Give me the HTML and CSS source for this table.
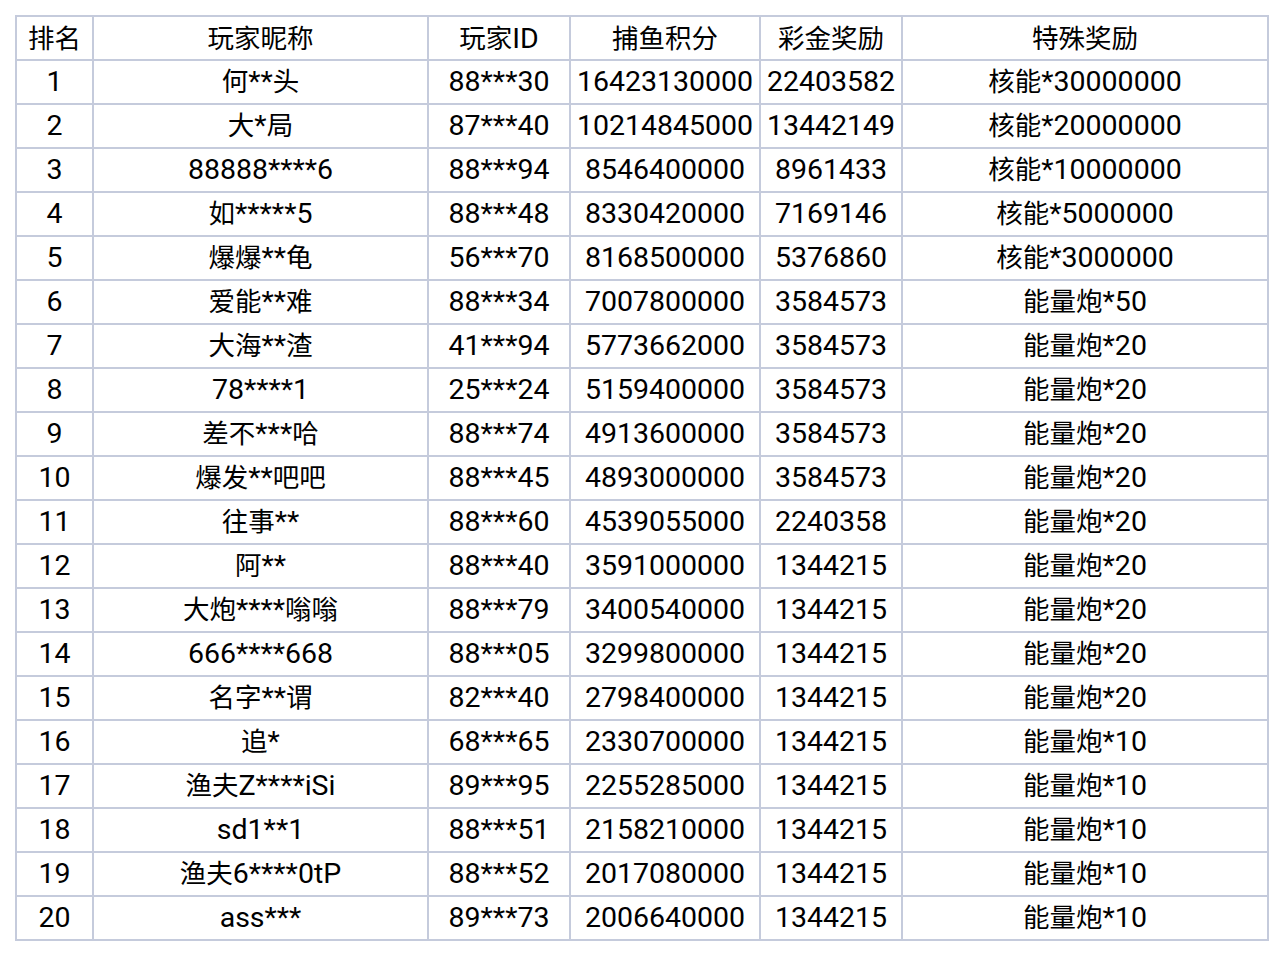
FILE: index.html
```html
<!DOCTYPE html>
<html lang="zh-CN">
<head>
<meta charset="utf-8">
<title>排名</title>
<link rel="stylesheet" href="styles.css">
</head>
<body>
<table class="rank">
  <colgroup>
    <col class="c1"><col class="c2"><col class="c3"><col class="c4"><col class="c5"><col class="c6">
  </colgroup>
  <thead>
    <tr><th><span class="zh">排名</span></th><th><span class="zh">玩家昵称</span></th><th><span class="zh">玩家</span>ID</th><th><span class="zh">捕鱼积分</span></th><th><span class="zh">彩金奖励</span></th><th><span class="zh">特殊奖励</span></th></tr>
  </thead>
  <tbody>
    <tr><td>1</td><td><span class="zh">何</span>**<span class="zh">头</span></td><td>88***30</td><td>16423130000</td><td>22403582</td><td><span class="zh">核能</span>*30000000</td></tr>
    <tr><td>2</td><td><span class="zh">大</span>*<span class="zh">局</span></td><td>87***40</td><td>10214845000</td><td>13442149</td><td><span class="zh">核能</span>*20000000</td></tr>
    <tr><td>3</td><td>88888****6</td><td>88***94</td><td>8546400000</td><td>8961433</td><td><span class="zh">核能</span>*10000000</td></tr>
    <tr><td>4</td><td><span class="zh">如</span>*****5</td><td>88***48</td><td>8330420000</td><td>7169146</td><td><span class="zh">核能</span>*5000000</td></tr>
    <tr><td>5</td><td><span class="zh">爆爆</span>**<span class="zh">龟</span></td><td>56***70</td><td>8168500000</td><td>5376860</td><td><span class="zh">核能</span>*3000000</td></tr>
    <tr><td>6</td><td><span class="zh">爱能</span>**<span class="zh">难</span></td><td>88***34</td><td>7007800000</td><td>3584573</td><td><span class="zh">能量炮</span>*50</td></tr>
    <tr><td>7</td><td><span class="zh">大海</span>**<span class="zh">渣</span></td><td>41***94</td><td>5773662000</td><td>3584573</td><td><span class="zh">能量炮</span>*20</td></tr>
    <tr><td>8</td><td>78****1</td><td>25***24</td><td>5159400000</td><td>3584573</td><td><span class="zh">能量炮</span>*20</td></tr>
    <tr><td>9</td><td><span class="zh">差不</span>***<span class="zh">哈</span></td><td>88***74</td><td>4913600000</td><td>3584573</td><td><span class="zh">能量炮</span>*20</td></tr>
    <tr><td>10</td><td><span class="zh">爆发</span>**<span class="zh">吧吧</span></td><td>88***45</td><td>4893000000</td><td>3584573</td><td><span class="zh">能量炮</span>*20</td></tr>
    <tr><td>11</td><td><span class="zh">往事</span>**</td><td>88***60</td><td>4539055000</td><td>2240358</td><td><span class="zh">能量炮</span>*20</td></tr>
    <tr><td>12</td><td><span class="zh">阿</span>**</td><td>88***40</td><td>3591000000</td><td>1344215</td><td><span class="zh">能量炮</span>*20</td></tr>
    <tr><td>13</td><td><span class="zh">大炮</span>****<span class="zh">嗡嗡</span></td><td>88***79</td><td>3400540000</td><td>1344215</td><td><span class="zh">能量炮</span>*20</td></tr>
    <tr><td>14</td><td>666****668</td><td>88***05</td><td>3299800000</td><td>1344215</td><td><span class="zh">能量炮</span>*20</td></tr>
    <tr><td>15</td><td><span class="zh">名字</span>**<span class="zh">谓</span></td><td>82***40</td><td>2798400000</td><td>1344215</td><td><span class="zh">能量炮</span>*20</td></tr>
    <tr><td>16</td><td><span class="zh">追</span>*</td><td>68***65</td><td>2330700000</td><td>1344215</td><td><span class="zh">能量炮</span>*10</td></tr>
    <tr><td>17</td><td><span class="zh">渔夫</span>Z****iSi</td><td>89***95</td><td>2255285000</td><td>1344215</td><td><span class="zh">能量炮</span>*10</td></tr>
    <tr><td>18</td><td>sd1**1</td><td>88***51</td><td>2158210000</td><td>1344215</td><td><span class="zh">能量炮</span>*10</td></tr>
    <tr><td>19</td><td><span class="zh">渔夫</span>6****0tP</td><td>88***52</td><td>2017080000</td><td>1344215</td><td><span class="zh">能量炮</span>*10</td></tr>
    <tr><td>20</td><td>ass***</td><td>89***73</td><td>2006640000</td><td>1344215</td><td><span class="zh">能量炮</span>*10</td></tr>
  </tbody>
</table>
</body>
</html>
```
FILE: styles.css
```css
html, body {
  margin: 0;
  padding: 0;
  background: #ffffff;
}
body {
  padding: 15px;
  font-family: Roboto, "Noto Sans CJK SC", sans-serif;
  color: #000000;
}
.rank {
  border-collapse: separate;
  border-spacing: 0;
  table-layout: fixed;
  width: 1254px;
  border-left: 2px solid #c5cbdc;
  border-top: 2px solid #c5cbdc;
}
.c1 { width: 77px; }
.c2 { width: 335px; }
.c3 { width: 142px; }
.c4 { width: 190px; }
.c5 { width: 142px; }
.c6 { width: 366px; }
.rank th,
.rank td {
  box-sizing: border-box;
  height: 44px;
  padding: 0 0 1px 0;
  border-right: 2px solid #c5cbdc;
  border-bottom: 2px solid #c5cbdc;
  text-align: center;
  vertical-align: middle;
  font-size: 28.5px;
  font-weight: normal;
  line-height: 34px;
  white-space: nowrap;
}
.rank th {
  padding: 1px 0 0 0;
}
.zh {
  font-family: "Noto Sans CJK SC", sans-serif;
  font-size: 26.5px;
  line-height: 30px;
}
```
